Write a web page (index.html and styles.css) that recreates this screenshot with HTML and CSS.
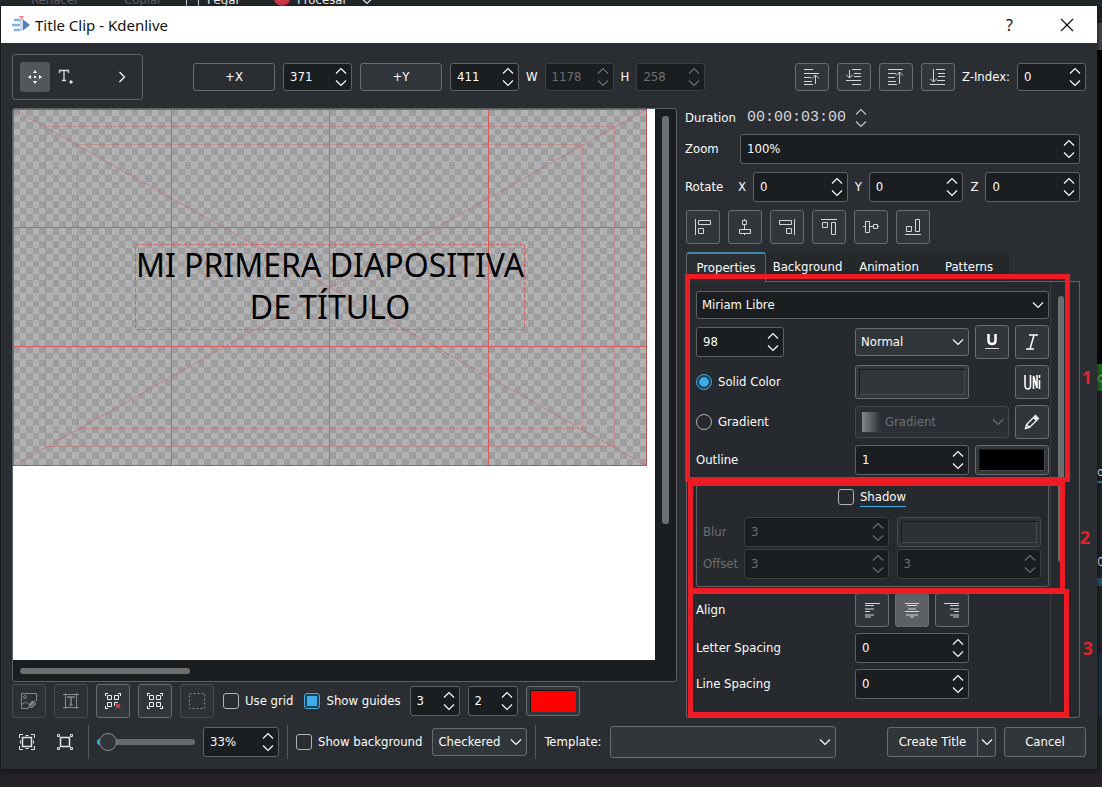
FILE: index.html
```html
<!DOCTYPE html>
<html lang="en">
<head>
<meta charset="utf-8">
<title>Title Clip - Kdenlive</title>
<link rel="stylesheet" href="styles.css">
</head>
<body>
<svg class="defs" aria-hidden="true">
  <symbol id="spin" viewBox="0 0 12 20"><path d="M1 6.500 6 1.500l5 5M1 13.500l5 5 5-5" fill="none" stroke="currentColor" stroke-width="1.200"/></symbol>
  <symbol id="down" viewBox="0 0 12 8"><path d="M1 1.500l5 5 5-5" fill="none" stroke="currentColor" stroke-width="1.200"/></symbol>
</svg>

<div class="desktop">
  <div class="menubar">
    <span class="menu-item dim menu-redo">Rehacer</span>
    <span class="menu-item dim menu-copy">Copiar</span>
    <span class="page-glyph"></span>
    <span class="menu-item menu-paste">Pegar</span>
    <span class="record"></span>
    <span class="menu-item">Procesar</span>
    <svg class="menu-arrow" width="12" height="8"><use href="#down"/></svg>
  </div>

  <div class="side">
    <div class="side-grey"></div>
    <div class="side-black"></div>
    <div class="side-green">c</div>
    <div class="side-plain"></div>
    <div class="side-text">o</div>
    <div class="side-plain short"></div>
    <div class="side-text tall">0</div>
    <div class="side-blue"></div>
    <div class="side-plain low"></div>
    <div class="side-navy"></div>
  </div>

  <main class="dialog">
    <header class="titlebar">
      <svg width="20" height="20" viewBox="0 0 20 20" aria-hidden="true"><path d="M3 5h6M1 10h9M3 15h6" stroke="#7fb2e0" stroke-width="2.500"/><path d="M9 4h3v12H9z" fill="#cfdcec"/><path d="M8 1h5l-2.500 4z" fill="#ec8a84"/><path d="M12 4.500v11L19 10z" fill="#4f7fb8"/></svg>
      <h1>Title Clip - Kdenlive</h1>
      <button class="win-button" aria-label="Help">?</button>
      <button class="win-button" aria-label="Close"><svg width="14" height="14" viewBox="0 0 14 14"><path d="M1 1l12 12M13 1 1 13" stroke="#111" stroke-width="1.200"/></svg></button>
    </header>

    <div class="content">
      <div class="topbar">
        <div class="tools">
          <button class="tool active" aria-label="Select"><svg width="16" height="16" viewBox="0 0 16 16"><path d="M8 1l2 3H6zM8 15l-2-3h4zM1 8l3-2v4zM15 8l-3 2V6zM7 7h2v2H7z" fill="#fcfcfc"/></svg></button>
          <button class="tool" aria-label="Add text"><svg width="16" height="16" viewBox="0 0 16 16"><path d="M1.500 4V1.500h9V4M6 1.500v10M4 11.500h4" fill="none" stroke="#d8d9da" stroke-width="1.300"/><path d="M13 11.500l1.500 1.500-1.500 1.500-1.500-1.500z" fill="#e4e5e6" stroke="#e4e5e6"/></svg></button>
          <button class="tool more" aria-label="More tools"><svg width="8" height="12" viewBox="0 0 8 12"><path d="M1.500 1l5 5-5 5" fill="none" stroke="#fcfcfc" stroke-width="1.200"/></svg></button>
        </div>
        <button class="btn origin flat">+X</button>
        <span class="spin w69"><input aria-label="X position" value="371"><svg><use href="#spin"/></svg></span>
        <button class="btn origin">+Y</button>
        <span class="spin w69"><input aria-label="Y position" value="411"><svg><use href="#spin"/></svg></span>
        <label class="dimension" for="w">W</label>
        <span class="spin w69 off"><input id="w" value="1178" disabled><svg><use href="#spin"/></svg></span>
        <label class="dimension" for="h">H</label>
        <span class="spin w69 off"><input id="h" value="258" disabled><svg><use href="#spin"/></svg></span>
        <span class="grow"></span>
        <button class="btn layer" aria-label="Raise"><svg width="16" height="16" viewBox="0 0 16 16"><path d="M0 .5h9M0 4.500h15M0 8.500h7M0 12.500h8M0 15.500h9M11.500 15V6M8 9.500 11.500 6 15 9.500"/></svg></button>
        <button class="btn layer" aria-label="Lower"><svg width="16" height="16" viewBox="0 0 16 16"><path d="M6 .5h9M8 4.500h7M8 7.500h7M0 11.500h15M6 15.500h9M3.500 1v8M0 5.500 3.500 9 7 5.500"/></svg></button>
        <button class="btn layer" aria-label="Raise to top"><svg width="16" height="16" viewBox="0 0 16 16"><path d="M0 .5h15M0 4.500h8M0 8.500h7M0 12.500h8M0 15.500h9M11.500 15V3M8 6.500 11.500 3 15 6.500"/></svg></button>
        <button class="btn layer" aria-label="Lower to bottom"><svg width="16" height="16" viewBox="0 0 16 16"><path d="M6 .5h9M8 4.500h7M8 7.500h7M7 11.500h8M0 15.500h15M3.500 0v13M0 9.500 3.500 13 7 9.500"/></svg></button>
        <label class="zlabel" for="z">Z-Index:</label>
        <span class="spin w69"><input id="z" value="0"><svg><use href="#spin"/></svg></span>
      </div>

      <div class="main">
        <section class="left">
          <div class="view">
            <div class="canvas">
              <svg width="635" height="358" viewBox="0 0 635 358">
                <defs>
                  <pattern id="checks" width="66" height="66" patternUnits="userSpaceOnUse">
                    <path d="M0 0h66v66H0z" fill="#b1b1b1"/>
                    <path id="odd" d="M0 0h7v7H0zM13 0h7v7h-7zM26 0h7v7h-7zM40 0h6v7h-6zM53 0h6v7h-6z" fill="#9d9da0"/>
                    <path id="even" d="M7 7h6v6H7zM20 7h6v6h-6zM33 7h7v6h-7zM46 7h7v6h-7zM59 7h7v6h-7z" fill="#9d9da0"/>
                    <use href="#odd" y="13"/><use href="#even" y="13"/>
                    <use href="#odd" y="26"/><use href="#even" y="26"/>
                    <use href="#odd" y="39"/><use href="#even" y="39"/>
                    <use href="#odd" y="53"/><use href="#even" y="53"/>
                  </pattern>
                </defs>
                <rect width="634" height="357" fill="url(#checks)"/>
                <g fill="none" stroke="#cc6262">
                  <path d="M32.500 17.500h569v320h-569zM64.500 35.500h505v284h-505z" stroke-opacity=".4"/>
                  <path d="M0 0l634 357M634 0 0 357" stroke-opacity=".6"/>
                </g>
                <g fill="#d65c5c">
                  <rect x="158" width="1" height="357"/>
                  <rect x="316" width="1" height="357"/>
                  <rect x="475" width="1" height="357"/>
                  <rect y="118" width="634" height="1"/>
                  <rect y="237" width="634" height="1"/>
                </g>
                <g fill="none">
                  <rect x=".5" y=".5" width="633" height="356" stroke="#b85555"/>
                  <rect x="122.500" y="135.500" width="389" height="85" stroke="#cc6262" stroke-dasharray="4 2"/>
                </g>
                <g class="title-text" text-anchor="middle"><text x="317" y="168">MI PRIMERA DIAPOSITIVA</text><text x="317" y="210">DE TÍTULO</text></g>
              </svg>
            </div>
            <div class="vbar"><div class="thumb"></div></div>
            <div class="hbar"><div class="thumb"></div></div>
          </div>
          <div class="guides">
            <button class="btn sq off" disabled aria-label="Fit image"><svg width="16" height="16" viewBox="0 0 16 16"><path d="M.5 12V.5h15V8M.5 12l4-3 3 2M.5 12v3.500H7"/><circle cx="4" cy="4" r="1.500"/><path d="M7 15l7-7M10 15l5-5M8 12l4-4" stroke-width="1.500"/></svg></button>
            <button class="btn sq off" disabled aria-label="Fit text"><svg width="16" height="16" viewBox="0 0 16 16"><path d="M2.500 0v16M13.500 0v16M0 1.500h16M0 14.500h16"/><path d="M5 5V4h6v1M8 4v8M6.500 12h3" stroke-width="1.500"/></svg></button>
            <button class="btn sq bright" aria-label="Unselect all"><svg width="16" height="16" viewBox="0 0 16 16"><path d="M2.500 2.500h4v4h-4zM9.500 2.500h4v4h-4zM2.500 9.500h4v4h-4zM9.500 13V9.500H13M0 .5h3M.5 0v3M13 .5h3M15.500 0v3M0 15.500h3M.5 13v3"/><path d="M11 11l4 4M15 11l-4 4" stroke="#da4453" stroke-width="1.500"/></svg></button>
            <button class="btn sq bright" aria-label="Select all"><svg width="16" height="16" viewBox="0 0 16 16"><path d="M2.500 2.500h4v4h-4zM9.500 2.500h4v4h-4zM2.500 9.500h4v4h-4zM9.500 9.500h4v4h-4zM0 .5h3M.5 0v3M13 .5h3M15.500 0v3M0 15.500h3M.5 13v3M13 15.500h3M15.500 13v3"/></svg></button>
            <button class="btn sq off" disabled aria-label="Select region"><svg width="16" height="16" viewBox="0 0 16 16"><rect x=".5" y=".5" width="15" height="15" stroke-dasharray="2 2"/></svg></button>
            <label class="check"><input type="checkbox">Use grid</label>
            <label class="check second"><input type="checkbox" checked>Show guides</label>
            <span class="spin w50"><input aria-label="Vertical guides" value="3"><svg><use href="#spin"/></svg></span>
            <span class="spin w50"><input aria-label="Horizontal guides" value="2"><svg><use href="#spin"/></svg></span>
            <button class="color guide" aria-label="Guide color"><span class="red"></span></button>
          </div>
        </section>

        <section class="right">
          <div class="row duration"><label for="dur">Duration</label><input id="dur" class="timecode" value="00:00:03:00"><svg class="step"><use href="#spin"/></svg></div>
          <div class="row"><label class="lead" for="zm">Zoom</label><span class="spin fill"><input id="zm" value="100%"><svg><use href="#spin"/></svg></span></div>
          <div class="row rotate"><span class="lead">Rotate</span>
            <label for="rx">X</label><span class="spin fill"><input id="rx" value="0"><svg><use href="#spin"/></svg></span>
            <label for="ry">Y</label><span class="spin fill"><input id="ry" value="0"><svg><use href="#spin"/></svg></span>
            <label for="rz">Z</label><span class="spin fill"><input id="rz" value="0"><svg><use href="#spin"/></svg></span>
          </div>
          <div class="aligns">
            <button class="btn sq" aria-label="Align left"><svg width="16" height="16" viewBox="0 0 16 16"><path d="M.5 0v16M3.500 1.500h12v4h-12zM3.500 9.500h5v5h-5z"/></svg></button>
            <button class="btn sq" aria-label="Center horizontally"><svg width="16" height="16" viewBox="0 0 16 16"><path d="M5.500 1.500h4v4h-4zM2.500 10.500h11v4h-11zM7.500 0v2M7.500 6v4M7.500 14v2"/></svg></button>
            <button class="btn sq" aria-label="Align right"><svg width="16" height="16" viewBox="0 0 16 16"><path d="M15.500 0v16M.5 1.500h12v4H.5zM7.500 9.500h5v5h-5z"/></svg></button>
            <button class="btn sq" aria-label="Align top"><svg width="16" height="16" viewBox="0 0 16 16"><path d="M0 .5h16M1.500 3.500h5v5h-5zM10.500 3.500h4v12h-4z"/></svg></button>
            <button class="btn sq" aria-label="Center vertically"><svg width="16" height="16" viewBox="0 0 16 16"><path d="M2.500 2.500h4v11h-4zM10.500 5.500h4v4h-4zM0 7.500h2M6 7.500h4M14 7.500h2"/></svg></button>
            <button class="btn sq" aria-label="Align bottom"><svg width="16" height="16" viewBox="0 0 16 16"><path d="M0 15.500h16M1.500 7.500h5v5h-5zM10.500.5h4v12h-4z"/></svg></button>
          </div>

          <div class="tabs">
            <button class="tab current">Properties</button><button class="tab">Background</button><button class="tab">Animation</button><button class="tab">Patterns</button><span class="tab-rest"></span>
          </div>
          <div class="panel">
            <div class="props">
              <span class="combo dark font"><select aria-label="Font"><option>Miriam Libre</option></select><svg><use href="#down"/></svg></span>
              <div class="grid">
                <span class="spin size"><input aria-label="Font size" value="98"><svg><use href="#spin"/></svg></span>
                <span class="combo"><select aria-label="Weight"><option>Normal</option></select><svg><use href="#down"/></svg></span>
                <button class="btn sq" aria-label="Underline"><svg width="16" height="16" viewBox="0 0 16 16"><path d="M4.500 0v6.500q0 3.500 3.500 3.500t3.500-3.500V0" stroke="#fcfcfc" stroke-width="2.500"/><path d="M1 14.500h14"/></svg></button>
                <button class="btn sq" aria-label="Italic"><svg width="16" height="16" viewBox="0 0 16 16"><path d="M5 1h9M2 15h8M10 1 6 15" stroke="#fcfcfc" stroke-width="1.500"/></svg></button>

                <label class="check"><input type="radio" name="fill" checked>Solid Color</label>
                <button class="color tall" aria-label="Text color"><span></span></button>
                <button class="btn sq last" aria-label="Unicode"><svg width="18" height="18" viewBox="0 0 18 18"><path d="M2 2v10q0 4 3 4 2.500 0 2.500-4V2M10.500 16V3l3.500 12V2M16.500 7v9M16.500 2v3" stroke="#fcfcfc" stroke-width="1.600"/></svg></button>

                <label class="check"><input type="radio" name="fill">Gradient</label>
                <span class="combo off wide"><span class="swatch"></span><select aria-label="Gradient" disabled><option>Gradient</option></select><svg><use href="#down"/></svg></span>
                <button class="btn sq" aria-label="Edit gradient"><svg width="16" height="16" viewBox="0 0 16 16"><path d="M1.500 14.500l1-4 9-9 3 3-9 9zM2.500 10.500l3 3M9.500 3.500l3 3" stroke="#fcfcfc" stroke-width="1.300"/><path d="M10 3l1.500-1.500 3 3L13 6z" fill="#fcfcfc"/></svg></button>

                <label for="ol">Outline</label>
                <span class="spin"><input id="ol" value="1"><svg><use href="#spin"/></svg></span>
                <button class="color span2" aria-label="Outline color"><span class="black"></span></button>
              </div>

              <fieldset class="shadow">
                <label class="check"><input type="checkbox"><span class="shadow-title">Shadow</span></label>
                <div class="shadow-grid">
                  <label for="bl">Blur</label><span class="spin off"><input id="bl" value="3" disabled><svg><use href="#spin"/></svg></span><button class="color off" disabled aria-label="Shadow color"><span></span></button>
                  <label for="of">Offset</label><span class="spin off"><input id="of" value="3" disabled><svg><use href="#spin"/></svg></span><span class="spin off"><input aria-label="Vertical offset" value="3" disabled><svg><use href="#spin"/></svg></span>
                </div>
              </fieldset>

              <div class="grid spacing">
                <span>Align</span>
                <span class="text-align">
                  <button class="btn sq" aria-label="Left"><svg width="16" height="16" viewBox="0 0 16 16"><path d="M1 1.500h15M1 3.500h9M1 7h9M1 9.500h5M1 13h9M1 15h6"/></svg></button>
                  <button class="btn sq pressed" aria-label="Center"><svg width="16" height="16" viewBox="0 0 16 16"><path d="M1 1.500h14M3 3.500h10M4 7h8M1 9.500h14M2 13h12M6 15h4"/></svg></button>
                  <button class="btn sq" aria-label="Right"><svg width="16" height="16" viewBox="0 0 16 16"><path d="M0 1.500h15M6 3.500h9M6 7h9M10 9.500h5M6 13h9M9 15h6"/></svg></button>
                </span>
                <label class="start" for="ls">Letter Spacing</label><span class="spin"><input id="ls" value="0"><svg><use href="#spin"/></svg></span>
                <label class="start" for="li">Line Spacing</label><span class="spin"><input id="li" value="0"><svg><use href="#spin"/></svg></span>
              </div>
            </div>
            <div class="panel-bar"><div class="thumb"></div></div>

            <div class="mark mark-1"><b>1</b></div>
            <div class="mark mark-2"><b>2</b></div>
            <div class="mark mark-3"><b>3</b></div>
          </div>
        </section>
      </div>

      <footer class="bottom">
        <button class="ghost" aria-label="Fit zoom"><svg width="16" height="16" viewBox="0 0 16 16" fill="none" stroke="#e4e5e6"><path d="M.5 4V.5H4M12 .5h3.500V4M15.500 12v3.500H12M4 15.500H.5V12"/><path d="M3.500 3.500h9v9h-9z" stroke-width="1.500"/><path d="M6.500 1.500h3M6.500 14.500h3M1.500 6.500v3M14.500 6.500v3"/></svg></button>
        <button class="ghost" aria-label="Original size"><svg width="16" height="16" viewBox="0 0 16 16" fill="none" stroke="#e4e5e6"><path d="M3.500 3.500h9v9h-9z" stroke-width="1.500"/><path d="M.5.5h2v2h-2zM13.500.5h2v2h-2zM.5 13.500h2v2h-2zM13.500 13.500h2v2h-2z"/></svg></button>
        <span class="sep"></span>
        <input class="slider" type="range" min="0" max="100" value="3" aria-label="Zoom level">
        <span class="spin w76"><input aria-label="Zoom percent" value="33%"><svg><use href="#spin"/></svg></span>
        <span class="sep"></span>
        <label class="check"><input type="checkbox">Show background</label>
        <span class="combo bg"><select aria-label="Background"><option>Checkered</option></select><svg><use href="#down"/></svg></span>
        <span class="sep"></span>
        <label for="tp">Template:</label>
        <span class="combo template"><select id="tp"><option></option></select><svg><use href="#down"/></svg></span>
        <span class="grow"></span>
        <span class="split"><button class="btn create">Create Title</button><button class="btn drop" aria-label="More create options"><svg width="12" height="8"><use href="#down"/></svg></button></span>
        <button class="btn cancel">Cancel</button>
      </footer>
    </div>
  </main>
</div>
</body>
</html>
```
FILE: styles.css
```css
* { box-sizing: border-box; }
body {
  margin: 0;
  background: #262329;
  color: #fcfcfc;
  font: 13px/18px "DejaVu Sans Condensed", "Noto Sans", sans-serif;
}
button, input, select { font: inherit; color: inherit; margin: 0; }
svg { display: block; flex: none; }
.defs { position: absolute; width: 0; height: 0; }
.grow { flex: 1; }

.desktop {
  display: grid;
  grid-template-columns: minmax(0, 1fr) 5px;
  grid-template-rows: 6px minmax(0, 1fr);
  min-height: 100vh;
  padding: 0 0 18px 1px;
  overflow: hidden;
}
.menubar {
  grid-column: 1 / 3;
  display: flex;
  align-items: flex-end;
  height: 6px;
  margin-left: -1px;
  padding-left: 31px;
  overflow: hidden;
  background: #25282c;
}
.menu-item { line-height: 12px; }
.menu-redo { width: 93px; }
.menu-copy { width: 62px; }
.menu-paste { width: 67px; }
.dim { color: #63666a; }
.page-glyph { width: 13px; height: 8px; margin-right: 8px; border: 1px solid #ddd; border-top: 0; border-bottom: 0; }
.record { width: 16px; height: 16px; margin-right: 7px; border-radius: 50%; background: #d83b4c; }
.menu-arrow { margin-left: 14px; margin-bottom: 1px; }

.side { grid-column: 2; grid-row: 2; display: flex; flex-direction: column; overflow: hidden; background: #202326; }
.side-grey { height: 27px; margin-top: 17px; background: #4b4d4f; }
.side-black { height: 314px; background: #000; }
.side-green { height: 27px; background: #1d7a1e; color: #7fc47f; line-height: 27px; }
.side-plain { height: 72px; }
.side-text { height: 20px; border-bottom: 2px solid #3a86ad; }
.short { height: 70px; }
.tall { height: 25px; border: 0; }
.side-blue { height: 8px; background: #2a5f80; }
.low { height: 68px; }
.side-navy { height: 64px; background: #1c3444; }

.dialog { grid-row: 2; grid-column: 1; display: flex; flex-direction: column; background: #2a2e32; box-shadow: 0 2px 8px #111; }
.titlebar { display: flex; align-items: center; height: 37px; padding: 0 7px 0 10px; background: #fff; color: #111; font-family: "Noto Sans", sans-serif; }
.titlebar h1 { flex: 1; margin: 0 0 0 4px; font-size: 15px; font-weight: 400; }
.win-button { display: grid; place-items: center; width: 57px; height: 36px; padding: 0; border: 0; background: none; font-size: 16px; }
.win-button:last-child { width: 46px; margin-left: 6px; }
.content { flex: 1; display: flex; flex-direction: column; padding: 11px 11px 10px; }

.btn {
  display: grid;
  place-items: center;
  flex: none;
  height: 28px;
  padding: 0;
  border: 1px solid #6a6d70;
  border-radius: 3px;
  background: #31363b;
}
.btn svg { fill: none; stroke: #d5d6d8; }
.btn.flat { background: #2a2e32; }
.btn.sq { width: 34px; height: 34px; }
.btn.off { border-color: #484b4f; background: #2d3135; }
.btn.off svg { stroke: #85888b; }
.btn.bright svg { stroke: #f0f0f0; }
.btn.pressed { background: #5d6063; }

.spin { display: flex; align-items: center; height: 30px; padding: 0 4px 0 6px; border: 1px solid #5f6265; border-radius: 3px; background: #1b1e20; }
.spin input { flex: 1; min-width: 0; width: 0; padding: 0; border: 0; background: none; outline: 0; }
.spin svg { width: 12px; height: 20px; }
.spin.fill { flex: 1; }
.off { color: #6c6f72; border-color: #3c3f43; }
.w69 { width: 69px; }
.w50 { width: 50px; }
.w76 { width: 76px; }

.combo { position: relative; display: flex; align-items: center; height: 28px; border: 1px solid #6a6d70; border-radius: 3px; background: #31363b; }
.combo select { flex: 1; min-width: 0; height: 100%; padding: 0 20px 0 5px; border: 0; background: none; appearance: none; opacity: 1; }
.combo svg { position: absolute; right: 4px; width: 12px; height: 8px; pointer-events: none; }
.combo.dark { background: #1b1e20; border-color: #5f6265; }
.combo.off { height: 32px; border-color: #45484c; background: #2b2f33; }

.color { height: 30px; padding: 3px; border: 1px solid #6a6d70; border-radius: 3px; background: #31363b; }
.color span { display: block; height: 100%; border: 1px solid #484c50; border-top-color: #151719; border-left-color: #151719; }
.color .red { background: #f00; }
.color .black { background: #000; }
.color.tall { height: 34px; }
.color.off { border-color: #484b4f; background: #2d3034; }

.check { display: flex; align-items: center; gap: 6px; white-space: nowrap; }
.check input { appearance: none; flex: none; width: 16px; height: 16px; border: 1px solid #b2b4b6; border-radius: 3px; }
.check input[type="radio"] { border-radius: 50%; }
.check input:checked { border-color: #3daee9; background: #3daee9; background-clip: content-box; padding: 2px; box-shadow: inset 0 0 0 2px #1e4358; }

.topbar { display: flex; align-items: center; gap: 8px; height: 46px; }
.topbar .spin { height: 28px; }
.tools { display: flex; align-items: center; width: 131px; height: 46px; margin-right: 42px; padding: 0 7px; border: 1px solid #5f6265; border-radius: 3px; }
.tool { display: grid; place-items: center; width: 32px; height: 30px; padding: 0; border: 0; border-radius: 3px; background: none; }
.tool.active { width: 30px; background: #53575a; }
.tool.more { margin-left: auto; width: 26px; }
.origin { width: 82px; }
.layer { width: 34px; }
.dimension { margin: 0 -1px; }
.zlabel { margin: 0 -1px; }

.main { flex: 1; display: grid; grid-template-columns: minmax(0, 1fr) 395px; gap: 8px; margin-top: 8px; padding-right: 6px; }
.left { display: flex; flex-direction: column; gap: 2px; }
.view { flex: 1; display: grid; grid-template: minmax(0, 1fr) 21px / minmax(0, 1fr) 21px; border: 1px solid #5f6265; border-radius: 3px; background: #1b1e20; }
.canvas { overflow: hidden; background: #fff; }
.title-text { font-family: "Noto Sans", sans-serif; font-size: 32px; fill: #000; }
.thumb { border-radius: 3px; background: #6c6e70; }
.vbar { padding: 7px 7px; }
.vbar .thumb { width: 7px; height: 76%; }
.hbar { padding: 8px 7px; }
.hbar .thumb { width: 27%; height: 6px; }

.guides { display: flex; align-items: center; gap: 8px; height: 34px; }
.guides .second { margin: 0 1px 0 3px; }
.guides .btn + .check { margin-left: 1px; }
.guide { width: 54px; }

.right { display: flex; flex-direction: column; }
.row { display: flex; align-items: center; height: 30px; margin-bottom: 8px; }
.duration { height: 20px; margin-bottom: 6px; }
.duration label { width: 62px; }
.timecode { width: 104px; padding: 0; border: 0; background: none; font: 15px/20px "Liberation Mono", monospace; color: #d8d9da; }
.step { width: 12px; height: 20px; margin-left: 4px; color: #c4c6c8; }
.lead { width: 55px; }
.rotate { gap: 7px; }
.rotate .lead { width: 46px; }
.aligns { display: flex; gap: 8px; padding-left: 1px; }

.tabs { display: flex; height: 30px; margin: 8px 0 0 1px; }
.tab { width: 80px; padding: 0; border: 0; border-bottom: 1px solid #5f6265; background: #25282b; }
.tab.current { border: 1px solid #5f6265; border-top: 2px solid #3f86ab; border-bottom: 0; border-radius: 3px 3px 0 0; background: #2a2e32; }
.tab:nth-child(2) { width: 83px; }
.tab-rest { flex: 1; border-bottom: 1px solid #5f6265; }
.panel { position: relative; flex: 1; display: flex; margin-left: 1px; border: 1px solid #5f6265; border-top: 0; border-radius: 0 0 3px 3px; background: #26292d; }
.props { flex: 1; padding: 9px 1px 0 9px; margin-bottom: 14px; border-right: 1px solid #393c40; }
.panel-bar { width: 28px; padding: 14px 7px; }
.panel-bar .thumb { width: 6px; height: 266px; }
.font { margin-bottom: 6px; }
.grid { display: grid; grid-template-columns: minmax(0, 1fr) 114px 34px 34px; gap: 6px; align-items: center; }
.size { width: 88px; }
.grid .last { grid-column: 4; }
.wide, .span2 { grid-column: span 2; }
.start { grid-column: 1; }
.swatch { width: 19px; height: 20px; margin-left: 6px; background: linear-gradient(90deg, #85888a, #2b2f33); }
.combo.off select { padding-left: 4px; }

.shadow { margin: 8px 0 6px; padding: 4px 7px 7px 6px; border: 1px solid #5f6265; border-radius: 3px; min-width: 0; }
.shadow .check { justify-content: center; height: 18px; margin-bottom: 11px; }
.shadow-title { border-bottom: 1px solid #3daee9; }
.shadow-grid { display: grid; grid-template-columns: 33px 1fr 1fr; gap: 2px 8px; align-items: center; color: #6c6f72; }
.text-align { display: flex; justify-content: space-between; }

.mark { position: absolute; border: 5px solid #ed1c24; pointer-events: none; }
.mark b { position: absolute; color: #e0222c; font-family: "Noto Sans", sans-serif; font-size: 18px; line-height: 20px; }
.mark-1 { left: -2px; right: 9px; top: -8px; height: 208px; }
.mark-1 b { right: -27px; top: 88px; }
.mark-2 { left: 1px; right: 14px; top: 199px; height: 112px; }
.mark-2 b { right: -30px; top: 41px; }
.mark-3 { left: 1px; right: 10px; top: 307px; bottom: 0; }
.mark-3 b { right: -29px; top: 44px; }

.bottom { display: flex; align-items: center; gap: 8px; height: 34px; margin-top: 7px; }
.ghost { display: grid; place-items: center; width: 30px; height: 30px; padding: 0; border: 0; background: none; }
.sep { width: 1px; height: 34px; background: #55585b; }
.slider { appearance: none; width: 98px; height: 20px; background: none; }
.slider::-webkit-slider-runnable-track { height: 6px; border-radius: 3px; background: linear-gradient(90deg, #3daee9 6px, #67696b 6px); }
.slider::-webkit-slider-thumb { appearance: none; width: 18px; height: 18px; margin-top: -6px; border: 1px solid #8b8d90; border-radius: 50%; background: #31363b; }
.bottom .bg { width: 95px; margin-left: 2px; }
.bottom .template { width: 226px; height: 32px; }
.split { display: flex; }
.bottom .btn { height: 30px; }
.create { width: 91px; border-radius: 3px 0 0 3px; }
.drop { width: 19px; margin-left: -1px; border-radius: 0 3px 3px 0; }
.cancel { width: 82px; }
```
